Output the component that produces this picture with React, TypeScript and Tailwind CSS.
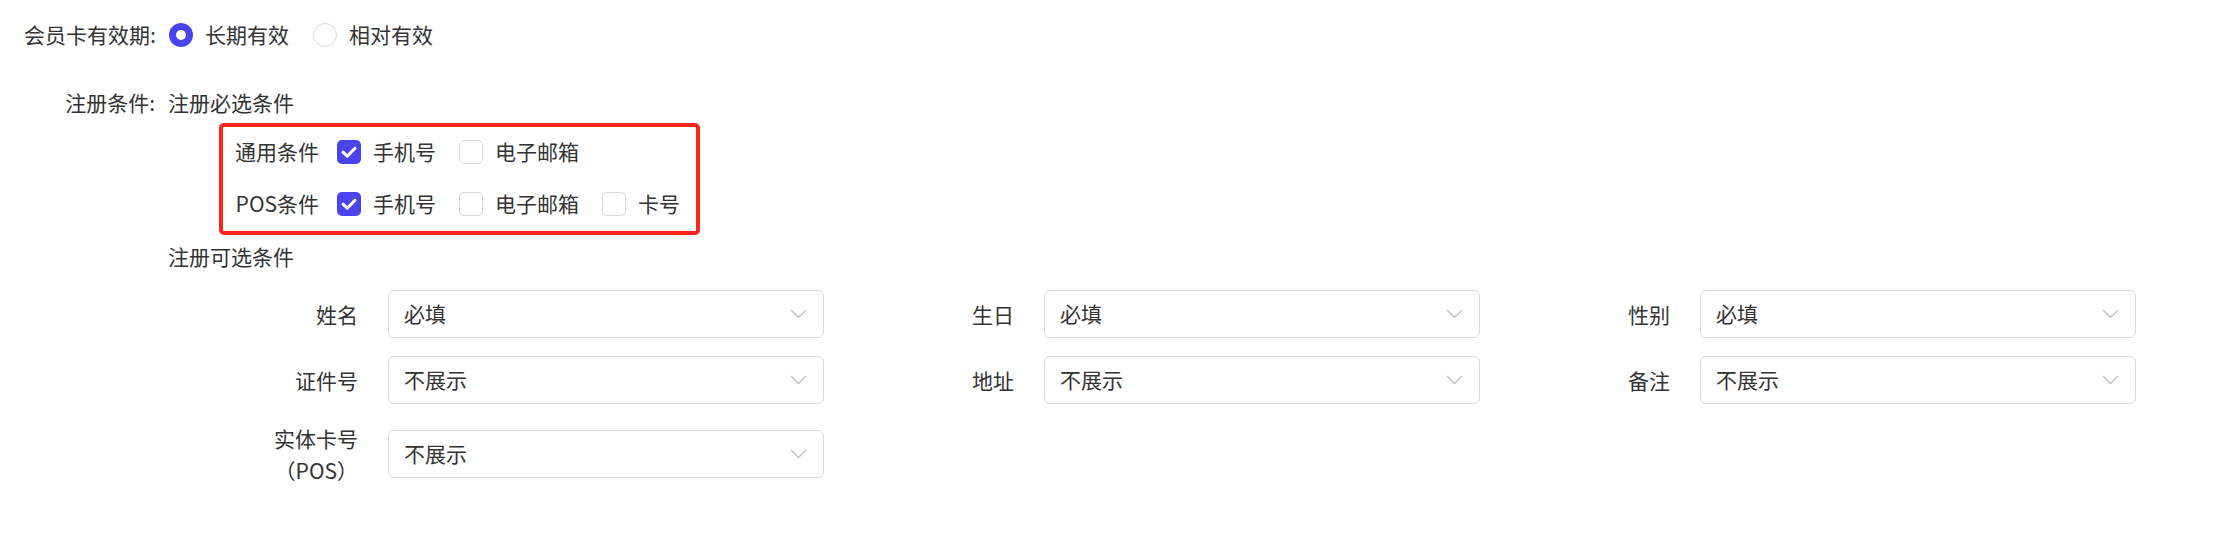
const PRIMARY = "bg-[#4845ef]";

function Radio({ checked, label }: { checked?: boolean; label: string }) {
  return (
    <label className="flex items-center mr-[24px] shrink-0 whitespace-nowrap">
      {checked ? (
        <span className={`w-[24px] h-[24px] rounded-full ${PRIMARY} flex items-center justify-center`}>
          <span className="w-[10px] h-[10px] rounded-full bg-white" />
        </span>
      ) : (
        <span className="w-[24px] h-[24px] rounded-full border border-[#d9d9d9] bg-white" />
      )}
      <span className="ml-[12px]">{label}</span>
    </label>
  );
}

function Checkbox({ checked, label }: { checked?: boolean; label: string }) {
  return (
    <label className="flex items-center mr-[23px] shrink-0 whitespace-nowrap">
      {checked ? (
        <span className={`w-[24px] h-[24px] shrink-0 rounded-[5px] ${PRIMARY} flex items-center justify-center`}>
          <svg width="24" height="24" viewBox="0 0 24 24" fill="none">
            <path d="M6 12.2 L10.2 16.2 L18 8.2" stroke="white" strokeWidth="3" strokeLinecap="round" strokeLinejoin="round" />
          </svg>
        </span>
      ) : (
        <span className="w-[24px] h-[24px] shrink-0 rounded-[5px] border border-[#d9d9d9] bg-white" />
      )}
      <span className="ml-[12px]">{label}</span>
    </label>
  );
}

function Select({ value }: { value: string }) {
  return (
    <div className="flex-1 h-[48px] rounded-[6px] border border-[#d9d9d9] bg-white flex items-center pl-[15px] pr-[16px]">
      <span className="flex-1 text-[#333]">{value}</span>
      <svg width="17" height="10" viewBox="0 0 17 10" fill="none">
        <polyline points="1,1 8.5,8.5 16,1" stroke="#bfbfbf" strokeWidth="1.4" />
      </svg>
    </div>
  );
}

function Field({ label, value }: { label: React.ReactNode; value: string }) {
  return (
    <div className="flex items-center">
      <div className="w-[220px] pr-[30px] text-right leading-[32px] text-[#333]">{label}</div>
      <Select value={value} />
    </div>
  );
}

const fields: { label: React.ReactNode; value: string }[] = [
  { label: "姓名", value: "必填" },
  { label: "生日", value: "必填" },
  { label: "性别", value: "必填" },
  { label: "证件号", value: "不展示" },
  { label: "地址", value: "不展示" },
  { label: "备注", value: "不展示" },
  {
    label: (
      <>
        实体卡号
        <br />
        （POS）
      </>
    ),
    value: "不展示",
  },
];

export default function App() {
  return (
    <div
      className="w-[2220px] h-[546px] bg-white text-[21px] text-[#333] pt-[19px]"
      style={{ fontFamily: '"Noto Sans CJK SC", "Noto Sans", sans-serif' }}
    >
      <div className="h-[32px] flex items-center pl-[24px]">
        <span className="w-[145px] whitespace-nowrap">会员卡有效期:</span>
        <Radio checked label="长期有效" />
        <Radio label="相对有效" />
      </div>

      <div className="flex mt-[35px]">
        <div className="w-[168px] shrink-0 h-[32px] leading-[32px] text-right pr-[13px] whitespace-nowrap">注册条件:</div>
        <div className="flex flex-col">
          <div className="h-[32px] leading-[32px]">注册必选条件</div>

          <div className="mt-[5px] ml-[51px] w-[481px] border-[4px] border-[#f8261c] rounded-[5px] pt-[7px] pb-[9px] flex flex-col gap-[16px]">
            <div className="h-[36px] flex items-center whitespace-nowrap">
              <span className="w-[96px] shrink-0 text-right">通用条件</span>
              <div className="ml-[18px] flex items-center">
                <Checkbox checked label="手机号" />
                <Checkbox label="电子邮箱" />
              </div>
            </div>
            <div className="h-[36px] flex items-center whitespace-nowrap">
              <span className="w-[96px] shrink-0 text-right">POS条件</span>
              <div className="ml-[18px] flex items-center">
                <Checkbox checked label="手机号" />
                <Checkbox label="电子邮箱" />
                <Checkbox label="卡号" />
              </div>
            </div>
          </div>

          <div className="mt-[5px] h-[32px] leading-[32px]">注册可选条件</div>

          <div className="mt-[18px] grid grid-cols-[repeat(3,656px)] gap-y-[18px]">
            {fields.map((f, i) => (
              <Field key={i} label={f.label} value={f.value} />
            ))}
          </div>
        </div>
      </div>
    </div>
  );
}
